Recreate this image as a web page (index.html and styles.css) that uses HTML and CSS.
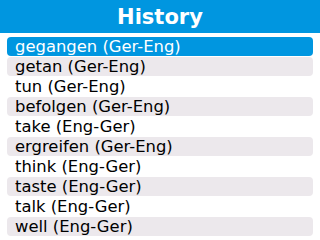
FILE: index.html
```html
<!DOCTYPE html>
<html>
<head>
<meta charset="utf-8">
<link rel="stylesheet" href="styles.css">
</head>
<body>
<div class="header">History</div>
<ul class="list">
  <li class="item selected">gegangen (Ger-Eng)</li>
  <li class="item alt">getan (Ger-Eng)</li>
  <li class="item">tun (Ger-Eng)</li>
  <li class="item alt">befolgen (Ger-Eng)</li>
  <li class="item">take (Eng-Ger)</li>
  <li class="item alt">ergreifen (Ger-Eng)</li>
  <li class="item">think (Eng-Ger)</li>
  <li class="item alt">taste (Eng-Ger)</li>
  <li class="item">talk (Eng-Ger)</li>
  <li class="item alt">well (Eng-Ger)</li>
</ul>
</body>
</html>
```
FILE: styles.css
```css
html, body {
  margin: 0;
  padding: 0;
  background: #ffffff;
  width: 320px;
  height: 240px;
  overflow: hidden;
  font-family: "DejaVu Sans", sans-serif;
}
.header {
  height: 33px;
  background: #0096e0;
  color: #ffffff;
  font-weight: bold;
  font-size: 21px;
  line-height: 35px;
  text-align: center;
}
.list {
  list-style: none;
  margin: 0;
  padding: 4px 7px 0 7px;
  display: flex;
  flex-direction: column;
  gap: 1px;
}
.item {
  height: 19px;
  line-height: 19px;
  font-size: 16.4px;
  color: #000000;
  padding-left: 8px;
  border-radius: 4px;
  white-space: nowrap;
}
.item.alt {
  background: #ece8ec;
}
.item.selected {
  background: #0096e0;
  color: #ffffff;
}
```
